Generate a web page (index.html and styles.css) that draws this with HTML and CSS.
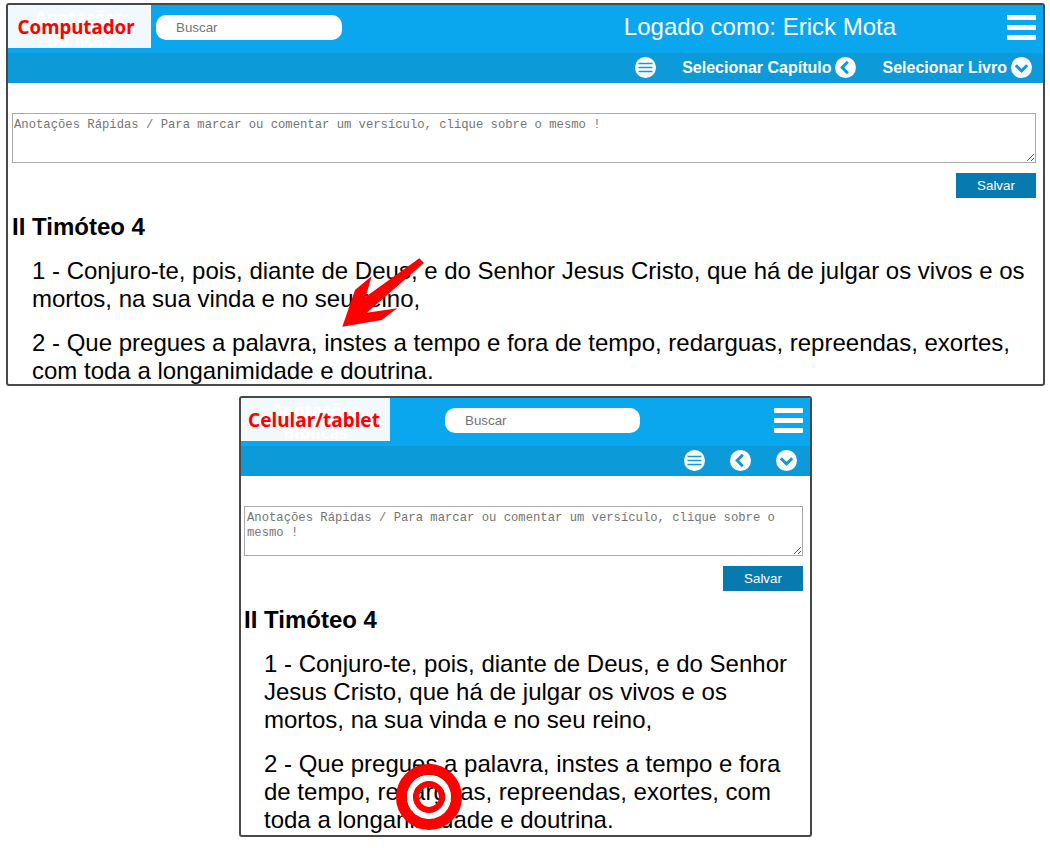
FILE: index.html
```html
<!DOCTYPE html>
<html lang="pt-BR">
<head>
    <meta charset="UTF-8">
    <title>Anotações Bíblicas</title>
    <link rel="stylesheet" href="styles.css">
</head>
<body>
    <svg width="0" height="0" class="defs">
        <symbol id="icon-list" viewBox="0 0 21 21">
            <circle cx="10.5" cy="10.5" r="10.5" fill="#fff"/>
            <path d="M3.5 6.5h14M3.5 10.5h14M3.5 14.5h14" stroke="#0d9ad8" stroke-width="1.7" fill="none"/>
        </symbol>
        <symbol id="icon-left" viewBox="0 0 21 21">
            <circle cx="10.5" cy="10.5" r="10.5" fill="#fff"/>
            <path d="M12.8 4.8l-5.6 5.7 5.6 5.7" stroke="#0d9ad8" stroke-width="3" fill="none"/>
        </symbol>
        <symbol id="icon-down" viewBox="0 0 21 21">
            <circle cx="10.5" cy="10.5" r="10.5" fill="#fff"/>
            <path d="M4.8 8.2l5.7 5.6 5.7-5.6" stroke="#0d9ad8" stroke-width="3" fill="none"/>
        </symbol>
    </svg>

    <div class="frame frame-desktop">
        <div class="topbar">
            <div class="logo logo-desktop">
                <span class="logo-ghost">Anotações<br>Bíblicas</span>
                <span class="logo-label">Computador</span>
            </div>
            <div class="search search-desktop">Buscar</div>
            <div class="user">Logado como: Erick Mota</div>
            <div class="burger"><i></i><i></i><i></i></div>
        </div>
        <div class="subbar">
            <svg class="icon icon-first"><use href="#icon-list"/></svg>
            <span class="sub-link sub-link-chapter">Selecionar Capítulo</span>
            <svg class="icon"><use href="#icon-left"/></svg>
            <span class="sub-link sub-link-book">Selecionar Livro</span>
            <svg class="icon"><use href="#icon-down"/></svg>
        </div>
        <div class="content">
            <textarea class="notes" placeholder="Anotações Rápidas / Para marcar ou comentar um versículo, clique sobre o mesmo !"></textarea>
            <div class="actions"><button class="save">Salvar</button></div>
            <h2>II Timóteo 4</h2>
            <p>1 - Conjuro-te, pois, diante de Deus, e do Senhor Jesus Cristo, que há de julgar os vivos e os mortos, na sua vinda e no seu reino,</p>
            <p>2 - Que pregues a palavra, instes a tempo e fora de tempo, redarguas, repreendas, exortes, com toda a longanimidade e doutrina.</p>
        </div>
    </div>

    <div class="frame frame-mobile">
        <div class="topbar">
            <div class="logo logo-mobile">
                <span class="logo-ghost">Anotações<br>Bíblicas</span>
                <span class="logo-label">Celular/tablet</span>
            </div>
            <div class="search search-mobile">Buscar</div>
            <div class="burger"><i></i><i></i><i></i></div>
        </div>
        <div class="subbar subbar-mobile">
            <svg class="icon"><use href="#icon-list"/></svg>
            <svg class="icon"><use href="#icon-left"/></svg>
            <svg class="icon"><use href="#icon-down"/></svg>
        </div>
        <div class="content">
            <textarea class="notes" placeholder="Anotações Rápidas / Para marcar ou comentar um versículo, clique sobre o mesmo !"></textarea>
            <div class="actions"><button class="save">Salvar</button></div>
            <h2>II Timóteo 4</h2>
            <p>1 - Conjuro-te, pois, diante de Deus, e do Senhor Jesus Cristo, que há de julgar os vivos e os mortos, na sua vinda e no seu reino,</p>
            <p>2 - Que pregues a palavra, instes a tempo e fora de tempo, redarguas, repreendas, exortes, com toda a longanimidade e doutrina.</p>
        </div>
    </div>

    <!-- marcas vermelhas por cima da captura -->
    <svg class="mark mark-arrow" width="90" height="75" viewBox="340 255 90 75">
        <path d="M419.3 258.3L424 263 366.7 312.7 397.3 308.3 381.7 320 342.3 326.7 355 290 371.7 276 365.7 296.7Z" fill="#f00"/>
    </svg>
    <svg class="mark mark-target" width="68" height="68" viewBox="0 0 68 68">
        <circle cx="34" cy="34" r="27.5" fill="none" stroke="#f00" stroke-width="11"/>
        <circle cx="34" cy="34" r="19" fill="none" stroke="#fff" stroke-width="6"/>
        <circle cx="34" cy="34" r="13" fill="none" stroke="#f00" stroke-width="6"/>
    </svg>
</body>
</html>
```

FILE: styles.css
```css
body {
    margin: 0;
    padding: 3px 0 0;
    font-family: "Liberation Sans", Arial, sans-serif;
    color: #000;
    background: #fff;
    display: flex;
    flex-direction: column;
    align-items: flex-start;
    gap: 10px;
}
.defs {
    position: absolute;
}
.frame {
    box-sizing: border-box;
    border: 2px solid #484848;
    border-radius: 3px;
    overflow: hidden;
    background: #fff;
}
.frame-desktop {
    width: 1039px;
    height: 383px;
    margin-left: 6px;
}
.frame-mobile {
    width: 573px;
    height: 441px;
    margin-left: 239px;
}
.topbar {
    height: 48px;
    background: #0aa7ee;
    display: flex;
    align-items: flex-start;
}
.logo {
    position: relative;
    height: 43px;
    background: #f2f9fd;
    flex: none;
    display: flex;
    align-items: center;
    justify-content: center;
}
.logo-desktop {
    width: 143px;
}
.logo-mobile {
    width: 149px;
}
.logo-ghost {
    position: absolute;
    left: 0;
    right: 0;
    top: 2px;
    text-align: center;
    font: 700 17px/22px "Noto Sans", sans-serif;
    color: #fff;
}
.logo-label {
    position: relative;
    font: 700 18.7px/24px "Noto Sans", sans-serif;
    color: #f00;
}
.logo-desktop .logo-label {
    margin-right: 7px;
}
.logo-mobile .logo-label {
    margin-right: 3px;
    font-size: 19px;
}
.search {
    box-sizing: border-box;
    height: 25px;
    margin-top: 10px;
    padding-left: 20px;
    border-radius: 10px;
    background: #fff;
    color: #757575;
    font-size: 13.33px;
    line-height: 25px;
}
.search-desktop {
    width: 186px;
    margin-left: 5px;
}
.search-mobile {
    width: 195px;
    margin-left: 55px;
}
.user {
    margin-left: auto;
    margin-right: 111px;
    margin-top: 8px;
    color: #fff;
    font-size: 24px;
    line-height: 28px;
}
.burger {
    width: 29px;
    margin-top: 10px;
    margin-right: 7px;
    display: flex;
    flex-direction: column;
    gap: 5px;
}
.search-mobile + .burger {
    margin-left: auto;
}
.burger i {
    display: block;
    height: 5px;
    background: #fff;
    border-radius: 1px;
}
.subbar {
    box-sizing: border-box;
    height: 30px;
    padding-bottom: 2px;
    background: #0d9ad8;
    display: flex;
    align-items: center;
    justify-content: flex-end;
    padding-right: 11px;
    color: #fff;
}
.subbar-mobile {
    gap: 25px;
    padding-right: 13px;
}
.icon {
    width: 21px;
    height: 21px;
    flex: none;
}
.icon-first {
    margin-right: 26px;
}
.sub-link {
    font-size: 16px;
    font-weight: 700;
    margin-right: 4px;
    padding-top: 2px;
}
.sub-link-chapter {
    margin-right: 3px;
}
.sub-link-book {
    margin-left: 27px;
}
.content {
    padding: 30px 7px 0 4px;
}
.frame-mobile .content {
    padding-left: 3px;
}
.notes {
    display: block;
    box-sizing: border-box;
    width: 100%;
    height: 50px;
    margin: 0;
    padding: 4px 1px;
    border: 1px solid #a9a9a9;
    font: 12.22px/15px "Liberation Mono", monospace;
}
.frame-mobile .notes {
    padding-left: 2px;
}
.actions {
    display: flex;
    justify-content: flex-end;
    margin-top: 10px;
}
.save {
    width: 80px;
    height: 25px;
    padding: 0;
    border: none;
    background: #077bb0;
    color: #fff;
    font: 13.33px "Liberation Sans", Arial, sans-serif;
}
h2 {
    margin: 16px 0 0;
    font-size: 24px;
    line-height: 26px;
}
p {
    margin: 16px 0 0 20px;
    font-size: 24px;
    line-height: 28px;
}
h2 + p {
    margin-top: 17px;
}
.mark {
    position: absolute;
}
.mark-arrow {
    left: 340px;
    top: 255px;
}
.mark-target {
    left: 395px;
    top: 763px;
}
```
